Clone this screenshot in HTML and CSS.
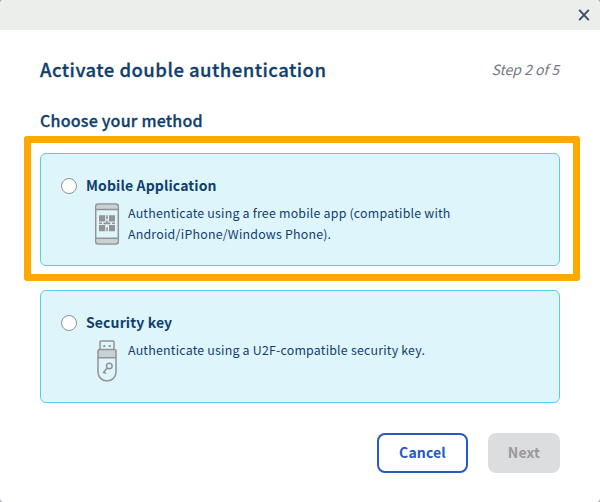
FILE: index.html
```html
<!DOCTYPE html>
<html lang="en">
<head>
<meta charset="utf-8">
<title>Activate double authentication</title>
<link rel="stylesheet" href="styles.css">
</head>
<body>
<div class="modal">
  <div class="topbar">
    <button class="close" aria-label="Close"><svg width="12" height="12" viewBox="0 0 12 12"><path d="M1.2 .8L10.8 11.2M10.8 .8L1.2 11.2"/></svg></button>
  </div>
  <div class="content">
    <div class="heading">
      <h1>Activate double authentication</h1>
      <span class="step">Step 2 of 5</span>
    </div>
    <h2>Choose your method</h2>
    <div class="methods">
      <div class="card highlighted">
        <label class="choice"><input type="radio" name="method"><span class="name">Mobile Application</span></label>
        <div class="detail">
          <svg class="icon" width="42" height="42" viewBox="0 0 42 42">
            <path class="shade" d="M10.5 2H31.5V6H10.5ZM10.5 36H31.5V40H10.5Z"/>
            <rect class="line" x="9.7" y="1" width="22.6" height="40" rx="2.5"/>
            <path class="line" d="M10 6.4H32M10 35.3H32"/>
            <path class="solid" d="M13 12.2h6.2v6.2h-6.2zM23 12.2h6v6.2h-6zM13 22h6.2v6.2h-6.2zM23 22h6v6.2h-6zM20.2 12.2h1.6v4h-1.6zM20.2 24.2h1.6v4h-1.6zM13 19.6h3v1.3h-3zM17.5 19.6h7v1.6h-7zM26 19.6h3v1.3h-3zM20.2 17.6h1.6v2h-1.6z"/>
          </svg>
          <p>Authenticate using a free mobile app (compatible with<br>Android/iPhone/Windows Phone).</p>
        </div>
      </div>
      <div class="card">
        <label class="choice"><input type="radio" name="method"><span class="name">Security key</span></label>
        <div class="detail">
          <svg class="icon" width="42" height="42" viewBox="0 0 42 42">
            <path class="shade" d="M12 10H30V18H12Z"/>
            <path class="line" d="M14 9V2q0-1 1-1H27q1 0 1 1V9M12 17.7V11q0-1.5 1.5-1.5H28.5q1.5 0 1.5 1.5V32a9 9 0 0 1-18 0V17.7H30"/>
            <path class="solid" d="M17.3 5h2v2h-2zM22.7 5h2v2h-2z"/>
            <circle class="line" cx="23.3" cy="26" r="2.8"/>
            <path class="line" d="M21.2 28L17 33M17.8 31.8L20 33.8"/>
          </svg>
          <p>Authenticate using a U2F-compatible security key.</p>
        </div>
      </div>
    </div>
    <div class="actions">
      <button class="button cancel">Cancel</button>
      <button class="button next" disabled>Next</button>
    </div>
  </div>
</div>
</body>
</html>
```

FILE: styles.css
```css
* { box-sizing: border-box; }
body {
  margin: 0;
  background: #a3aab9;
  font-family: "Noto Sans CJK SC", "Noto Sans", sans-serif;
  color: #113f6d;
}
.modal {
  height: 502px;
  overflow: hidden;
  border-radius: 4px;
  background: #fff;
}
.topbar {
  height: 30px;
  padding-right: 10px;
  display: flex;
  align-items: center;
  justify-content: flex-end;
  background: #ebeeeb;
}
.close {
  display: flex;
  padding: 0;
  border: 0;
  background: none;
}
.close path { fill: none; stroke: #3b4d66; stroke-width: 1.9; }
.content { padding: 24px 40px 0; }
.heading {
  display: flex;
  height: 30px;
  align-items: center;
  justify-content: space-between;
}
h1, h2, p { margin: 0; }
h1, h2 { font-weight: 500; -webkit-text-stroke: 0.3px currentColor; }
h1 { font-size: 18.5px; line-height: 30px; letter-spacing: 0.47px; }
h2 { margin-top: 24px; font-size: 16px; line-height: 24px; letter-spacing: 0.22px; }
.step { margin-right: 1px; line-height: 30px; font-size: 14px; font-style: italic; color: #707985; }
.methods { display: flex; flex-direction: column; gap: 24px; margin-top: 21px; }
.card {
  height: 113px;
  padding: 20px 20px 0;
  border: 1px solid #4ed3eb;
  border-radius: 6px;
  background: #dff5fc;
}
.highlighted { position: relative; }
.highlighted::before {
  content: "";
  position: absolute;
  inset: -17.6px -21px -15.5px -17px;
  border: 7px solid #ffa800;
  border-radius: 3px;
}
.choice { display: flex; align-items: center; height: 22px; }
.choice input {
  appearance: none;
  width: 16px;
  height: 16px;
  margin: 2px 9px 0 0;
  border: 1px solid #919191;
  border-radius: 50%;
  background: #fff;
}
.name { font-size: 14px; line-height: 22px; font-weight: 700; letter-spacing: 0.12px; }
.detail { display: flex; padding: 7px 0 0 25px; }
.icon { flex: none; }
.detail p { font-size: 12.4px; line-height: 21px; letter-spacing: 0.2px; }
.line { fill: none; stroke: #919395; stroke-width: 1.5; }
.solid { fill: #919395; }
.shade { fill: #cbd0d3; }
.actions { display: flex; gap: 20px; justify-content: flex-end; margin-top: 30px; }
.button {
  height: 40px;
  padding: 0 0 2px;
  border: 0;
  border-radius: 8px;
  font: 700 14px "Noto Sans CJK SC", sans-serif;
  letter-spacing: 0.15px;
}
.cancel { width: 91px; border: 2px solid #2859c0; background: #fff; color: #2859c0; }
.next { width: 72px; background: #dcdddf; color: #999; }
```
